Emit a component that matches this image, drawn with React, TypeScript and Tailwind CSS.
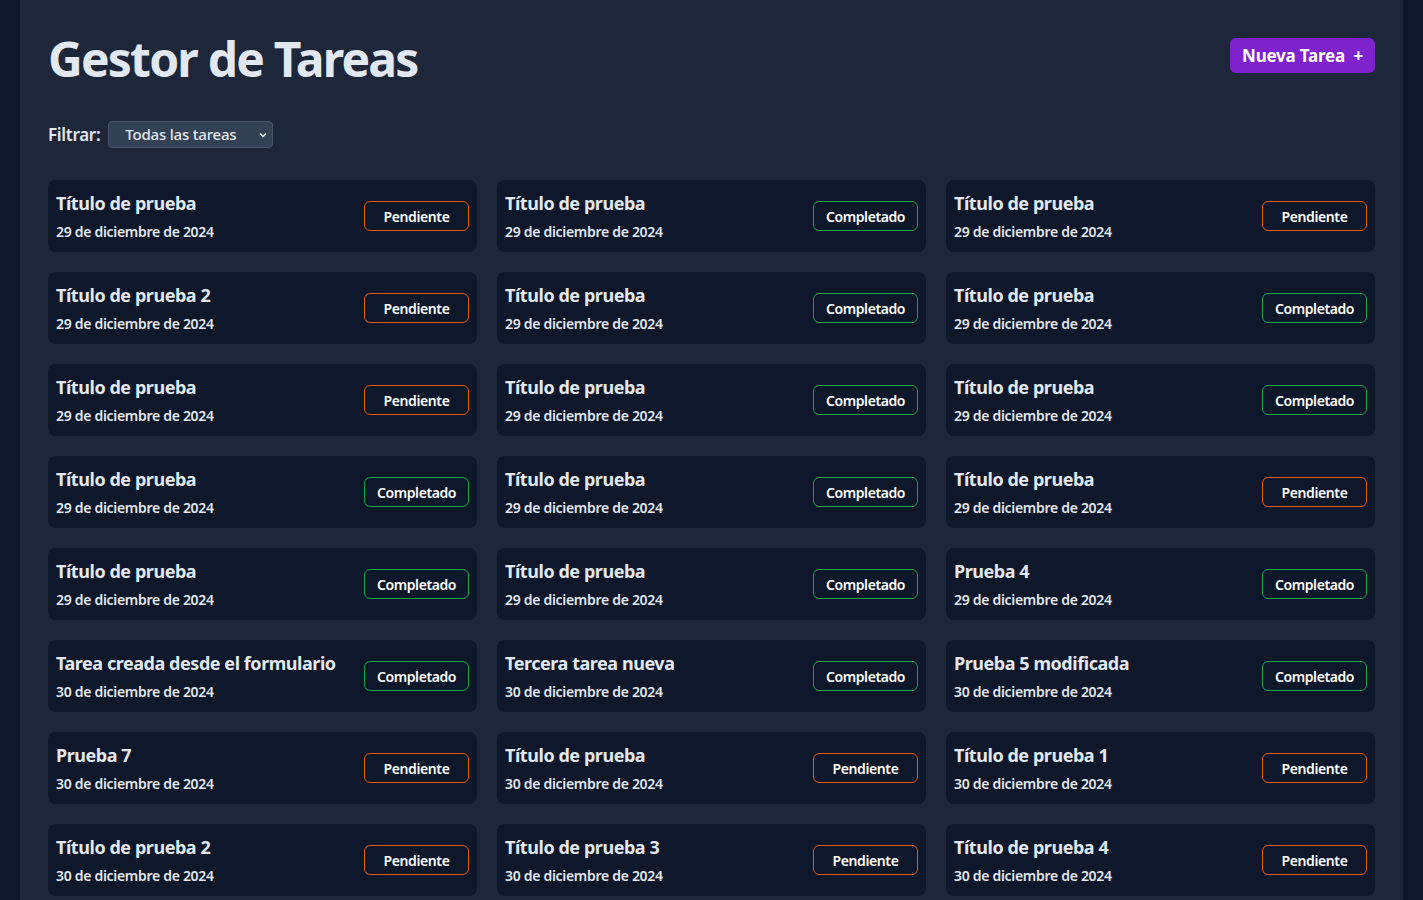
import React, { useState } from 'react';

type Task = { title: string; date: string; done: boolean };

const tasks: Task[] = [
  { title: 'Título de prueba', date: '29 de diciembre de 2024', done: false },
  { title: 'Título de prueba', date: '29 de diciembre de 2024', done: true },
  { title: 'Título de prueba', date: '29 de diciembre de 2024', done: false },
  { title: 'Título de prueba 2', date: '29 de diciembre de 2024', done: false },
  { title: 'Título de prueba', date: '29 de diciembre de 2024', done: true },
  { title: 'Título de prueba', date: '29 de diciembre de 2024', done: true },
  { title: 'Título de prueba', date: '29 de diciembre de 2024', done: false },
  { title: 'Título de prueba', date: '29 de diciembre de 2024', done: true },
  { title: 'Título de prueba', date: '29 de diciembre de 2024', done: true },
  { title: 'Título de prueba', date: '29 de diciembre de 2024', done: true },
  { title: 'Título de prueba', date: '29 de diciembre de 2024', done: true },
  { title: 'Título de prueba', date: '29 de diciembre de 2024', done: false },
  { title: 'Título de prueba', date: '29 de diciembre de 2024', done: true },
  { title: 'Título de prueba', date: '29 de diciembre de 2024', done: true },
  { title: 'Prueba 4', date: '29 de diciembre de 2024', done: true },
  { title: 'Tarea creada desde el formulario', date: '30 de diciembre de 2024', done: true },
  { title: 'Tercera tarea nueva', date: '30 de diciembre de 2024', done: true },
  { title: 'Prueba 5 modificada', date: '30 de diciembre de 2024', done: true },
  { title: 'Prueba 7', date: '30 de diciembre de 2024', done: false },
  { title: 'Título de prueba', date: '30 de diciembre de 2024', done: false },
  { title: 'Título de prueba 1', date: '30 de diciembre de 2024', done: false },
  { title: 'Título de prueba 2', date: '30 de diciembre de 2024', done: false },
  { title: 'Título de prueba 3', date: '30 de diciembre de 2024', done: false },
  { title: 'Título de prueba 4', date: '30 de diciembre de 2024', done: false },
];

const TaskCard = ({ task }: { task: Task }) => (
  <div className="flex items-center justify-between h-[72px] bg-[#0f172a] rounded-lg pl-2 pr-2">
    <div className="flex flex-col">
      <span className="text-[18px] font-bold leading-6 tracking-[-0.45px] text-slate-200">{task.title}</span>
      <span className="text-[14px] font-semibold leading-5 mt-[7px] tracking-[-0.3px] text-slate-200">{task.date}</span>
    </div>
    <span
      className={`${
        task.done ? 'border-[#16a34a]' : 'border-[#ea580c]'
      } border rounded-md w-[105px] h-[30px] flex items-center justify-center text-[14px] font-semibold tracking-[-0.4px] text-white`}
    >
      {task.done ? 'Completado' : 'Pendiente'}
    </span>
  </div>
);

const App = () => {
  const [filter, setFilter] = useState('todas');

  return (
    <div
      className="min-h-screen bg-[#0f172a] px-[20px]"
      style={{ fontFamily: '"Noto Sans", "Open Sans", sans-serif' }}
    >
      <div className="bg-[#1e263a] px-7 pt-[27px] pb-10 min-h-screen">
        <div className="flex items-start justify-between">
          <h1 className="text-[48px] font-bold leading-[64px] text-slate-200 tracking-[-1.8px]">Gestor de Tareas</h1>
          <button className="mt-[11px] h-[35px] px-3 bg-[#7e22ce] rounded-md text-white text-[17px] font-bold tracking-[-0.2px]">
            Nueva Tarea&nbsp;&nbsp;+
          </button>
        </div>

        <div className="flex items-center gap-2 mt-[30px]">
          <label htmlFor="filtro" className="text-[17px] font-semibold tracking-[-0.3px] text-slate-200">
            Filtrar:
          </label>
          <div className="relative">
            <select
              id="filtro"
              value={filter}
              onChange={(e) => setFilter(e.target.value)}
              className="appearance-none w-[165px] h-[27px] pl-4 pr-8 bg-[#334155] border border-[#475569] rounded text-[15px] font-medium tracking-[-0.2px] text-slate-200"
            >
              <option value="todas">Todas las tareas</option>
              <option value="pendientes">Pendientes</option>
              <option value="completadas">Completadas</option>
            </select>
            <svg
              className="absolute right-[5px] top-[9px] pointer-events-none"
              width="10"
              height="10"
              viewBox="0 0 10 10"
              fill="none"
              stroke="#e2e8f0"
              strokeWidth="1.5"
            >
              <path d="M2 3.5 L5 6.5 L8 3.5" />
            </svg>
          </div>
        </div>

        <div className="grid grid-cols-3 gap-5 mt-[32px]">
          {tasks.map((task, index) => (
            <TaskCard key={index} task={task} />
          ))}
        </div>
      </div>
    </div>
  );
};

export default App;
